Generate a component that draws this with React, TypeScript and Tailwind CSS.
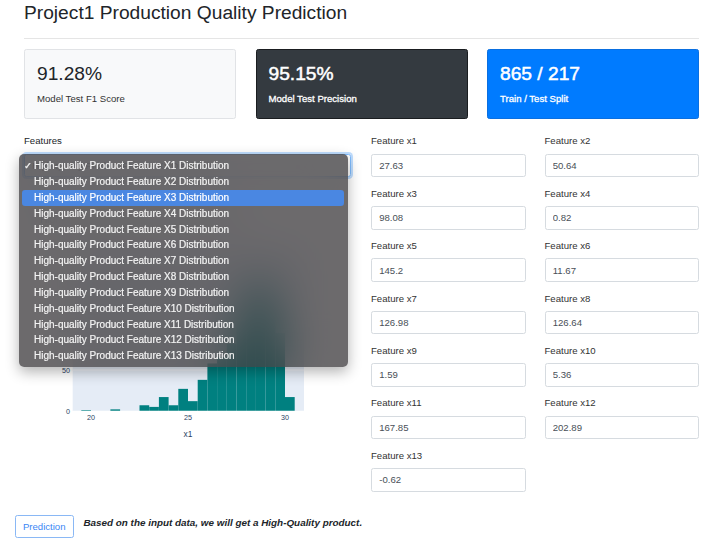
import React from "react";

const bins: [number, number][] = [
  [19.5, 1], [21, 2], [22.5, 7], [23, 5], [23.5, 17], [24, 7], [24.5, 27], [25, 12], [25.5, 38],
  [26, 58], [26.5, 66], [27, 82], [27.5, 110], [28, 150], [28.5, 165], [29, 140], [29.5, 95], [30, 17],
];

const xp = (v: number) => 67 + (v - 20) * 19.4;
const yp = (c: number) => 222 - c * 0.82;

function Histogram() {
  return (
    <svg width="327" height="270" viewBox="0 0 327 270" className="block">
      <text x="16" y="34" fontSize="10.2" fill="#2a3f5f" fontFamily="Liberation Sans, Arial, sans-serif">
        High-quality Product Feature X1 Distribution
      </text>
      <rect x="48.7" y="60" width="231.3" height="162" fill="#e5ecf6" />
      {[50, 100, 150].map((c) => (
        <line key={c} x1="48.7" x2="280" y1={yp(c)} y2={yp(c)} stroke="#ffffff" strokeWidth="0.7" />
      ))}
      {bins.map(([v, c]) => (
        <rect key={v} x={xp(v)} y={yp(c)} width={9.7} height={c * 0.82} fill="#008080" />
      ))}
      <line x1="48.7" x2="280" y1="222.3" y2="222.3" stroke="#ffffff" strokeWidth="1.2" />
      {[0, 50, 100, 150].map((c) => (
        <text key={c} x="46" y={yp(c) + 2.5} fontSize="7.2" textAnchor="end" fill="#2a3f5f" fontFamily="Liberation Sans, Arial, sans-serif">
          {c}
        </text>
      ))}
      {[20, 25, 30].map((v) => (
        <text key={v} x={xp(v)} y="230.5" fontSize="7.2" textAnchor="middle" fill="#2a3f5f" fontFamily="Liberation Sans, Arial, sans-serif">
          {v}
        </text>
      ))}
      <text x="164" y="247.5" fontSize="8.4" textAnchor="middle" fill="#2a3f5f" fontFamily="Liberation Sans, Arial, sans-serif">
        x1
      </text>
    </svg>
  );
}

const features: [string, string][] = [
  ["Feature x1", "27.63"],
  ["Feature x2", "50.64"],
  ["Feature x3", "98.08"],
  ["Feature x4", "0.82"],
  ["Feature x5", "145.2"],
  ["Feature x6", "11.67"],
  ["Feature x7", "126.98"],
  ["Feature x8", "126.64"],
  ["Feature x9", "1.59"],
  ["Feature x10", "5.36"],
  ["Feature x11", "167.85"],
  ["Feature x12", "202.89"],
  ["Feature x13", "-0.62"],
];

const menuItems = Array.from({ length: 13 }, (_, i) => `High-quality Product Feature X${i + 1} Distribution`);

export default function App() {
  return (
    <div className="relative w-[720px] h-[542px] overflow-hidden bg-white text-[#212529] font-[family-name:Liberation_Sans,Arial,sans-serif]">
      <div className="pl-[24px] w-[699px]">
        <h2 className="pt-[1.4px] text-[19.2px] leading-[23px] mb-0 font-normal">
          Project1 Production Quality Prediction
        </h2>
        <hr className="mt-[14px] mb-[9.6px] border-0 border-t border-[rgba(0,0,0,0.1)]" />
        <div className="grid grid-cols-3 gap-x-[19.5px] w-[675px]">
          <div className="h-[70.4px] rounded-[2.4px] border border-[#e1e3e6] bg-[#f8f9fa] px-[12px] pt-[12px]">
            <div className="text-[19.2px] leading-[23px]">91.28%</div>
            <div className="mt-[7px] text-[9.6px] leading-[14.4px] text-[#333]">Model Test F1 Score</div>
          </div>
          <div className="h-[70.4px] rounded-[2.4px] border border-[#1a1d20] bg-[#343a40] text-white px-[12px] pt-[12px]">
            <div className="text-[19.2px] leading-[23px] [-webkit-text-stroke:0.5px_white]">95.15%</div>
            <div className="mt-[7px] text-[9.6px] leading-[14.4px] [-webkit-text-stroke:0.3px_white]">Model Test Precision</div>
          </div>
          <div className="h-[70.4px] rounded-[2.4px] border border-[#0a6fe0] bg-[#007bff] text-white px-[12px] pt-[12px]">
            <div className="text-[19.2px] leading-[23px] [-webkit-text-stroke:0.5px_white]">865 / 217</div>
            <div className="mt-[7px] text-[9.6px] leading-[14.4px] [-webkit-text-stroke:0.3px_white]">Train / Test Split</div>
          </div>
        </div>

        <div className="flex gap-x-[20px] mt-[15px]">
          <div className="w-[327px]">
            <div className="text-[9.6px] leading-[14.4px] mb-[4.8px]">Features</div>
            <div className="h-[23.6px] rounded-[2.4px] border border-[#80bdff] shadow-[0_0_0_2px_rgba(0,123,255,0.25)] px-[7.2px] text-[9.6px] leading-[21.6px] text-[#495057]">
              High-quality Product Feature X1 Distribution
            </div>
            <div className="mt-[12.1px]">
              <Histogram />
            </div>
          </div>
          <div className="w-[328px] grid grid-cols-2 gap-x-[19px] content-start">
            {features.map(([label, value]) => (
              <div key={label} className="mb-[9.6px]">
                <div className="text-[9.6px] leading-[14.4px] mb-[4.8px] text-[#333]">{label}</div>
                <input
                  readOnly
                  defaultValue={value}
                  className="block w-full h-[23.6px] rounded-[2.4px] border border-[#d6dbe0] px-[7.2px] text-[9.6px] text-[#495057] bg-white outline-none"
                />
              </div>
            ))}
          </div>
        </div>
      </div>

      <div className="flex items-start gap-x-[9.7px] pl-[14.7px] mt-[13.4px]">
        <button className="h-[23.6px] px-[7.2px] rounded-[2.4px] border border-[#8ab8f5] text-[#3b87f5] text-[9.6px] leading-[21.6px] bg-white">
          Prediction
        </button>
        <p className="mt-[1.2px] text-[9.9px] leading-[14.4px] font-bold italic text-[#212529]">
          Based on the input data, we will get a High-Quality product.
        </p>
      </div>

      <div className="absolute left-[18.7px] top-[154px] w-[329px] h-[213px] rounded-[5px] bg-[rgba(62,59,62,0.76)] backdrop-blur-[22px] shadow-[0_5px_14px_rgba(0,0,0,0.3)] pt-[4.3px] px-[3.3px]">
        {menuItems.map((t, i) => (
          <div
            key={t}
            className={
              i === 2
                ? "relative h-[15.83px] leading-[15.83px] rounded-[3px] pl-[12px] text-[10px] bg-[#4a87e2] text-white [-webkit-text-stroke:0.2px_white]"
                : "relative h-[15.83px] leading-[15.83px] rounded-[3px] pl-[12px] text-[10px] text-[#f3f3f3] [-webkit-text-stroke:0.2px_#f3f3f3]"
            }
          >
            {i === 0 && (
              <span className="absolute left-[2px] top-0 text-[9.5px] font-[family-name:DejaVu_Sans,sans-serif]">✓</span>
            )}
            {t}
          </div>
        ))}
      </div>
    </div>
  );
}
